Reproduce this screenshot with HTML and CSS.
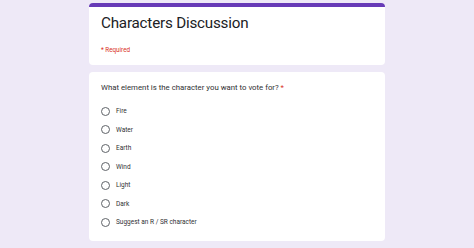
FILE: index.html
```html
<!DOCTYPE html>
<html>
<head>
<meta charset="utf-8">
<link rel="stylesheet" href="styles.css">
</head>
<body>
<main class="form">
  <section class="card header-card">
    <h1 class="title">Characters Discussion</h1>
    <div class="required">* Required</div>
  </section>
  <section class="card question-card">
    <div class="question">What element is the character you want to vote for? <span class="star">*</span></div>
    <ul class="options">
      <li class="option"><span class="radio"></span><span class="label">Fire</span></li>
      <li class="option"><span class="radio"></span><span class="label">Water</span></li>
      <li class="option"><span class="radio"></span><span class="label">Earth</span></li>
      <li class="option"><span class="radio"></span><span class="label">Wind</span></li>
      <li class="option"><span class="radio"></span><span class="label">Light</span></li>
      <li class="option"><span class="radio"></span><span class="label">Dark</span></li>
      <li class="option"><span class="radio"></span><span class="label">Suggest an R / SR character</span></li>
    </ul>
  </section>
</main>
</body>
</html>
```
FILE: styles.css
```css
html, body {
  margin: 0;
  padding: 0;
}
body {
  background: #eee9f7;
  font-family: Roboto, "Liberation Sans", Arial, sans-serif;
  color: #202124;
  width: 474px;
  height: 248px;
  overflow: hidden;
}
.form {
  width: 296px;
  margin: 0 auto;
  padding-top: 3px;
  display: flex;
  flex-direction: column;
  gap: 7px;
}
.card {
  background: #fff;
  border-radius: 4px;
  box-sizing: border-box;
}
.header-card {
  border-top: 4px solid #673ab7;
  height: 62px;
  padding: 5px 12px 0 12px;
}
.title {
  margin: 0;
  font-family: Roboto, "Liberation Sans", sans-serif;
  font-weight: 400;
  font-size: 15.2px;
  line-height: 22px;
  letter-spacing: -0.2px;
  color: #202124;
}
.required {
  margin-top: 12px;
  font-size: 6.3px;
  color: #d93025;
}
.question-card {
  height: 169px;
  padding: 11px 12px 0 12px;
}
.question {
  font-size: 7.8px;
  line-height: 10px;
  color: #303134;
}
.star {
  color: #d93025;
}
.options {
  list-style: none;
  margin: 13px 0 0 0;
  padding: 0;
  display: flex;
  flex-direction: column;
  gap: 8.5px;
}
.option {
  display: flex;
  align-items: center;
  height: 10px;
  gap: 6px;
}
.radio {
  width: 7px;
  height: 7px;
  border: 1.3px solid #5f6368;
  border-radius: 50%;
  flex: none;
}
.label {
  font-size: 6.5px;
  color: #303134;
}
```
